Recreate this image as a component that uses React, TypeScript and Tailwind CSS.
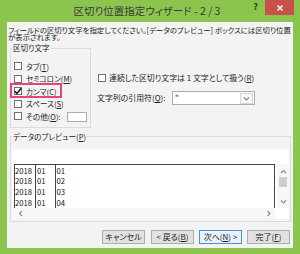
const jp = "font-['Noto_Sans_CJK_JP','Noto_Sans',sans-serif] [font-feature-settings:'palt']";

function K({ c }: { c: string }) {
  return <span className="underline decoration-[0.5px] underline-offset-[1px]">{c}</span>;
}

function Box({ checked = false }: { checked?: boolean }) {
  return (
    <span className="flex h-[8px] w-[8px] shrink-0 items-center justify-center border border-[#707070] bg-white">
      {checked && (
        <svg viewBox="0 0 8 8" className="h-[8px] w-[8px] overflow-visible">
          <path d="M0.8 4.2 L3 6.4 L7.2 1.2" fill="none" stroke="#111" strokeWidth="1.5" />
        </svg>
      )}
    </span>
  );
}

function Chevron({ dir }: { dir: "up" | "down" | "left" | "right" }) {
  const d = {
    up: "M1 4 L3.5 1.5 L6 4",
    down: "M1 1.5 L3.5 4 L6 1.5",
    left: "M4 1 L1.5 3.5 L4 6",
    right: "M1.5 1 L4 3.5 L1.5 6",
  }[dir];
  const size = dir === "up" || dir === "down" ? "h-[5px] w-[7px]" : "h-[7px] w-[5px]";
  const vb = dir === "up" || dir === "down" ? "0 0 7 5" : "0 0 5 7";
  return (
    <svg viewBox={vb} className={size}>
      <path d={d} fill="none" stroke="#8a8a8a" strokeWidth="1.1" />
    </svg>
  );
}

const rows = [
  ["2018", "01", "01"],
  ["2018", "01", "02"],
  ["2018", "01", "03"],
  ["2018", "01", "04"],
];

export default function App() {
  return (
    <div className={`flex h-[254px] w-[300px] flex-col bg-[#8cc54e] ${jp}`}>
      {/* Title bar */}
      <div className="flex h-[22px] shrink-0">
        <div className="flex-1" />
        <div className="flex items-center text-[10.5px] text-[#3a3a3a]">区切り位置指定ウィザード - 2 / 3</div>
        <div className="flex flex-1 items-start justify-end pr-[6px]">
          <span className="mr-[7px] mt-[1px] text-[9px] font-bold leading-[12px] text-[#2a3a1e]">?</span>
          <span className="flex h-[15px] w-[29px] items-center justify-center bg-[#c9514b]">
            <svg viewBox="0 0 6 6" className="h-[6px] w-[6px]">
              <path d="M0.5 0.5 L5.5 5.5 M5.5 0.5 L0.5 5.5" stroke="#fff" strokeWidth="1.3" />
            </svg>
          </span>
        </div>
      </div>

      {/* Body */}
      <div className="mx-[7px] mb-[6px] flex flex-1 flex-col bg-[#f3f3f3] text-[#222]">
        <p className="whitespace-nowrap pl-[1px] pt-[4px] text-[7.4px] leading-[7px]">
          フィールドの区切り文字を指定してください。[データのプレビュー] ボックスには区切り位置
          <br />
          が表示されます。
        </p>

        <div className="mt-[3px] flex">
          <fieldset className="ml-[3px] w-[81px] border border-[#dcdcdc] px-[3px] pb-[4px] pt-[7px] text-[7.6px]">
            <legend className="-ml-[2px] px-[1px] leading-[10px]">区切り文字</legend>
            <div className="flex h-[12.5px] items-center gap-[4px]">
              <Box />
              <span>タブ(<K c="T" />)</span>
            </div>
            <div className="flex h-[12.5px] items-center gap-[4px]">
              <Box />
              <span>セミコロン(<K c="M" />)</span>
            </div>
            <div className="relative flex h-[12.5px] items-center gap-[4px]">
              <Box checked />
              <span>カンマ(<K c="C" />)</span>
              <span className="absolute -left-[4px] -top-[2px] h-[15px] w-[52px] border-2 border-[#e6447d]" />
            </div>
            <div className="flex h-[12.5px] items-center gap-[4px]">
              <Box />
              <span>スペース(<K c="S" />)</span>
            </div>
            <div className="flex h-[12.5px] items-center gap-[4px]">
              <Box />
              <span>その他(<K c="O" />):</span>
              <span className="ml-auto mt-[1px] h-[10px] w-[20px] border border-[#abadb3] bg-white" />
            </div>
          </fieldset>

          <div className="ml-[6px] flex flex-col pt-[28.5px] text-[7.9px]">
            <div className="ml-[1px] flex h-[12px] items-center gap-[3px]">
              <Box />
              <span>連続した区切り文字は 1 文字として扱う(<K c="R" />)</span>
            </div>
            <div className="mt-[7.5px] flex h-[14px] items-center">
              <span className="w-[75px]">文字列の引用符(<K c="Q" />):</span>
              <div className="flex h-[14px] w-[83px] items-center border border-[#abadb3] bg-white">
                <span className="flex-1 pl-[2px] text-[8px]">"</span>
                <span className="mr-[1px] flex h-[11px] w-[13px] items-center justify-center border border-[#d5d5d5] bg-[#f7f7f7]">
                  <Chevron dir="down" />
                </span>
              </div>
            </div>
          </div>
        </div>

        <fieldset className="ml-[3px] mt-[4px] w-[280px] border border-[#dcdcdc] px-[1px] pb-[2px] pt-[7px] text-[7.6px]">
          <legend className="px-[1px] leading-[10px]">データのプレビュー(<K c="P" />)</legend>
          <div className="flex h-[70px] flex-col bg-white">
            <div className="h-[15px]" />
            <div className="flex h-[44px]">
              <div className="ml-[2px] flex w-[261px] border-x border-t border-[#444] font-['Noto_Sans_CJK_JP',sans-serif] text-[7.7px] leading-[10.8px] text-[#111]">
                <div className="w-[20px] pt-[1px]">
                  {rows.map((r, i) => (
                    <div key={i}>{r[0]}</div>
                  ))}
                </div>
                <div className="w-[20px] border-l border-[#444] pl-[1px] pt-[1px]">
                  {rows.map((r, i) => (
                    <div key={i}>{r[1]}</div>
                  ))}
                </div>
                <div className="flex-1 border-l border-[#444] pl-[0.5px] pt-[1px]">
                  {rows.map((r, i) => (
                    <div key={i}>{r[2]}</div>
                  ))}
                </div>
              </div>
              <div className="ml-[2px] flex w-[12px] flex-col items-center bg-[#f7f7f7] pt-[5px]">
                <Chevron dir="up" />
                <span className="mt-[3px] h-[10px] w-[8px] bg-[#cdcdcd]" />
                <span className="mt-[12px]">
                  <Chevron dir="down" />
                </span>
              </div>
            </div>
            <div className="flex h-[11px] w-[263px] items-center justify-between bg-[#f7f7f7] pl-[6px] pr-[4px]">
              <Chevron dir="left" />
              <Chevron dir="right" />
            </div>
          </div>
        </fieldset>

        <div className="mt-[8px] flex justify-end pr-[3px] text-[8px]">
          <button className="mr-[6px] h-[14px] w-[43px] border border-[#adadad] bg-[#e1e1e1]">キャンセル</button>
          <button className="mr-[5px] h-[14px] w-[43px] border border-[#adadad] bg-[#e1e1e1]">&lt; 戻る(<K c="B" />)</button>
          <button className="mr-[5px] h-[14px] w-[43px] border border-[#4a90d6] bg-[#e8f0f8]">次へ(<K c="N" />) &gt;</button>
          <button className="h-[14px] w-[43px] border border-[#adadad] bg-[#e1e1e1]">完了(<K c="F" />)</button>
        </div>
      </div>
    </div>
  );
}
